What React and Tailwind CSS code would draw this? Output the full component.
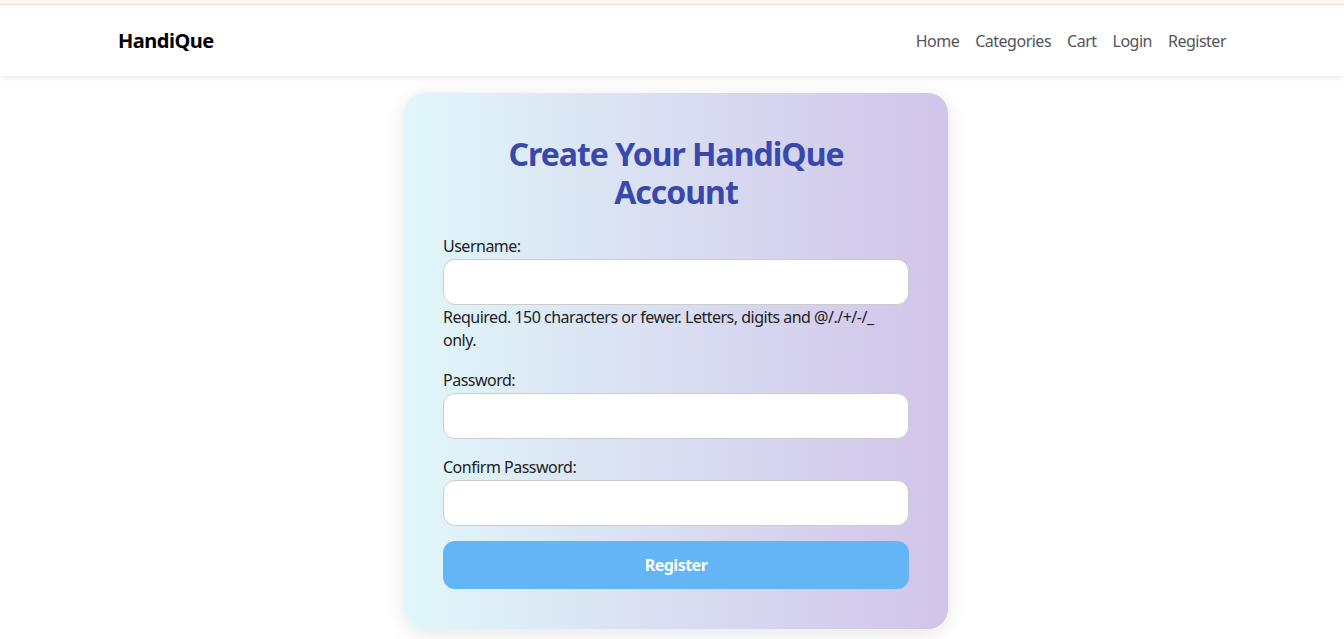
import React from "react";

const Field = ({ label, type = "text", help }) => (
  <div className="mb-[15px]">
    <label className="block text-[16px] text-[#222] leading-[26px]">{label}</label>
    <input
      type={type}
      className="block w-full h-[46px] bg-white border border-[#ccc] rounded-[12px] px-3 outline-none"
    />
    {help && <p className="mt-[1px] text-[16px] leading-[23px] text-[#222]">{help}</p>}
  </div>
);

export default function App() {
  return (
    <div className="min-h-screen bg-white tracking-[-0.5px] font-['Segoe_UI','Noto_Sans',sans-serif]">
      <div className="h-[5px] bg-[#fff4f2] border-b border-[#fbd8d2]"></div>
      <nav className="h-[71px] bg-white shadow-[0_2px_6px_rgba(0,0,0,0.08)] flex items-center justify-between px-[118px]">
        <span className="text-[20px] font-bold text-black">HandiQue</span>
        <div className="flex gap-4 text-[16px] text-[#555]">
          <a>Home</a>
          <a>Categories</a>
          <a>Cart</a>
          <a>Login</a>
          <a>Register</a>
        </div>
      </nav>
      <div className="flex justify-center pt-[17px] pl-[8px]">
        <div className="w-[544px] rounded-[20px] bg-gradient-to-r from-[#e0f7fa] to-[#d1c4e9] shadow-[0_4px_20px_rgba(0,0,0,0.1)] px-[39px] pt-[42px] pb-[40px]">
          <h1 className="text-center text-[32px] font-bold leading-[38px] tracking-[-1px] text-[#3949ab] px-12 mb-[22px]">
            Create Your HandiQue Account
          </h1>
          <Field label="Username:" help="Required. 150 characters or fewer. Letters, digits and @/./+/-/_ only." />
          <Field label="Password:" type="password" />
          <Field label="Confirm Password:" type="password" />
          <button className="block w-full h-[48px] bg-[#64b5f6] rounded-[12px] text-white font-bold text-[16px]">
            Register
          </button>
        </div>
      </div>
    </div>
  );
}
